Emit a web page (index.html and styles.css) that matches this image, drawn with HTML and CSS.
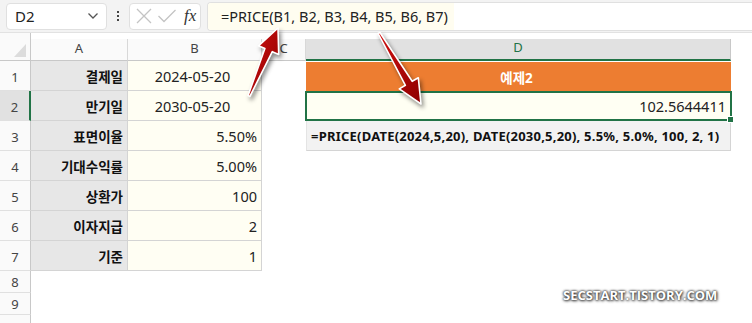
FILE: index.html
```html
<!DOCTYPE html>
<html lang="ko">

<head>
    <meta charset="UTF-8">
    <title>PRICE 예제2</title>
    <link rel="stylesheet" href="styles.css">
</head>

<body>
    <div class="toolbar">
        <div class="name-box">
            <span>D2</span>
            <svg class="chevron" width="12" height="8" viewBox="0 0 12 8">
                <path d="M1.5 1.5 L6 6 L10.5 1.5" fill="none" stroke="#555" stroke-width="1.3"/>
            </svg>
        </div>
        <div class="dots"><i></i><i></i><i></i></div>
        <div class="fx-box">
            <svg width="18" height="18" viewBox="0 0 18 18">
                <path d="M2 2 L16 16 M16 2 L2 16" stroke="#c4c4c4" stroke-width="1.3"/>
            </svg>
            <svg width="20" height="18" viewBox="0 0 20 18">
                <path d="M1.5 9 L7 14.5 L18.5 3" fill="none" stroke="#c4c4c4" stroke-width="1.3"/>
            </svg>
            <span class="fx">fx</span>
        </div>
        <div class="formula-bar">
            <span class="formula-text">=PRICE(B1, B2, B3, B4, B5, B6, B7)</span>
        </div>
    </div>

    <div class="sheet">
        <!-- column headers -->
        <div class="corner"><span class="tri"></span></div>
        <div class="col-head">A</div>
        <div class="col-head">B</div>
        <div class="col-head">C</div>
        <div class="col-head active">D</div>
        <div class="col-head blank"></div>

        <!-- row 1 -->
        <div class="row-head">1</div>
        <div class="cell label">결제일</div>
        <div class="cell value center">2024-05-20</div>
        <div class="cell"></div>
        <div class="cell title">예제2</div>
        <div class="cell"></div>

        <!-- row 2 -->
        <div class="row-head active">2</div>
        <div class="cell label">만기일</div>
        <div class="cell value center">2030-05-20</div>
        <div class="cell"></div>
        <div class="cell result">102.5644411<span class="handle"></span></div>
        <div class="cell"></div>

        <!-- row 3 -->
        <div class="row-head">3</div>
        <div class="cell label">표면이율</div>
        <div class="cell value">5.50%</div>
        <div class="cell"></div>
        <div class="cell note">=PRICE(DATE(2024,5,20), DATE(2030,5,20), 5.5%, 5.0%, 100, 2, 1)</div>
        <div class="cell"></div>

        <!-- row 4 -->
        <div class="row-head">4</div>
        <div class="cell label">기대수익률</div>
        <div class="cell value">5.00%</div>
        <div class="cell"></div>
        <div class="cell"></div>
        <div class="cell"></div>

        <!-- row 5 -->
        <div class="row-head">5</div>
        <div class="cell label">상환가</div>
        <div class="cell value">100</div>
        <div class="cell"></div>
        <div class="cell"></div>
        <div class="cell"></div>

        <!-- row 6 -->
        <div class="row-head">6</div>
        <div class="cell label">이자지급</div>
        <div class="cell value">2</div>
        <div class="cell"></div>
        <div class="cell"></div>
        <div class="cell"></div>

        <!-- row 7 -->
        <div class="row-head">7</div>
        <div class="cell label">기준</div>
        <div class="cell value">1</div>
        <div class="cell"></div>
        <div class="cell"></div>
        <div class="cell"></div>

        <div class="row-head short">8</div>
        <div class="cell"></div>
        <div class="cell"></div>
        <div class="cell"></div>
        <div class="cell"></div>
        <div class="cell"></div>

        <div class="row-head short">9</div>
        <div class="cell"></div>
        <div class="cell"></div>
        <div class="cell"></div>
        <div class="cell"></div>
        <div class="cell"></div>

        <div class="row-head short"></div>
    </div>

    <!-- callout arrows drawn over the sheet -->
    <svg class="arrows" width="752" height="323" viewBox="0 0 752 323">
        <defs>
            <linearGradient id="red" x1="0" y1="0" x2="1" y2="1">
                <stop offset="0" stop-color="#d01010"/>
                <stop offset="1" stop-color="#8e0000"/>
            </linearGradient>
        </defs>
        <polygon points="248.1,95.6 264.9,48.5 258.5,45.8 278,28 278.7,54.4 272.3,51.7 249.9,96.4"
            fill="url(#red)" stroke="#fff" stroke-width="1.6" stroke-linejoin="round"/>
        <polygon points="378.1,33.5 405.4,85.3 399.3,88.9 421,104 418.3,77.7 412.2,81.3 379.9,32.5"
            fill="url(#red)" stroke="#fff" stroke-width="1.6" stroke-linejoin="round"/>
    </svg>

    <div class="watermark">SECSTART.TISTORY.COM</div>
</body>

</html>
```

FILE: styles.css
```css
body {
    margin: 0;
    width: 752px;
    height: 323px;
    overflow: hidden;
    position: relative;
    background-color: #fff;
    font-family: 'Noto Sans', 'Noto Sans CJK KR', sans-serif;
    color: #222;
}

/* formula toolbar */
.toolbar {
    display: flex;
    align-items: center;
    height: 33px;
    padding-left: 6px;
    background-color: #f3f3f3;
    border-bottom: 1px solid #e2e2e2;
    box-sizing: border-box;
}

.name-box {
    display: flex;
    align-items: center;
    justify-content: space-between;
    width: 101px;
    height: 27px;
    padding: 0 7px 0 8px;
    box-sizing: border-box;
    background-color: #fff;
    border: 1px solid #e0e0e0;
    border-radius: 4px;
    font-size: 15px;
}

.dots {
    display: flex;
    flex-direction: column;
    gap: 2px;
    width: 22px;
    align-items: center;
}

.dots i {
    display: block;
    width: 2px;
    height: 2px;
    background-color: #444;
}

.fx-box {
    display: flex;
    align-items: center;
    gap: 4px;
    width: 72px;
    height: 27px;
    padding-left: 5px;
    box-sizing: border-box;
    background-color: #fff;
    border: 1px solid #e0e0e0;
    border-radius: 4px;
}

.fx {
    font-family: 'Liberation Serif', serif;
    font-style: italic;
    font-size: 17px;
    color: #333;
    margin-left: 3px;
}

.formula-bar {
    flex: 1;
    height: 27px;
    margin-left: 6px;
    display: flex;
    align-items: center;
    background-color: #fff;
    border: 1px solid #e0e0e0;
    border-right: none;
    border-radius: 4px 0 0 4px;
    overflow: hidden;
}

.formula-text {
    height: 100%;
    display: flex;
    align-items: center;
    padding: 0 6px 0 13px;
    background-color: #fffdf0;
    font-size: 14.5px;
    white-space: nowrap;
}

/* sheet grid */
.sheet {
    display: grid;
    grid-template-columns: 31px 97px 134px 44px 425px 1fr;
    grid-template-rows: 28px repeat(7, 30px) 22px 22px 22px;
    background-color: #fff;
}

.corner {
    background-color: #fafafa;
    border-right: 1px solid #c8c8c8;
    border-bottom: 1px solid #c8c8c8;
    position: relative;
}

.tri {
    position: absolute;
    right: 4px;
    bottom: 3px;
    width: 0;
    height: 0;
    border-left: 12px solid transparent;
    border-bottom: 13px solid #dcdcdc;
}

.col-head {
    display: flex;
    align-items: flex-end;
    justify-content: center;
    padding-bottom: 3px;
    box-sizing: border-box;
    margin-top: 6px;
    font-size: 13px;
    color: #444;
    background-color: #fafafa;
    border-right: 1px solid #d8d8d8;
    border-bottom: 1px solid #c8c8c8;
}

.col-head.active {
    background-color: #e1e1e1;
    color: #217346;
    border-bottom: 2px solid #217346;
    border-right-color: #c8c8c8;
}

.col-head.blank {
    background-color: #fff;
    border: none;
}

.row-head {
    display: flex;
    align-items: flex-end;
    justify-content: center;
    padding-bottom: 4px;
    box-sizing: border-box;
    font-size: 13px;
    color: #444;
    background-color: #fafafa;
    border-right: 1px solid #c8c8c8;
    border-bottom: 1px solid #e0e0e0;
}

.row-head.active {
    background-color: #e1e1e1;
    border-right: 2px solid #217346;
}

.row-head.short {
    align-items: center;
    padding-bottom: 0;
}

.cell {
    display: flex;
    align-items: center;
    justify-content: flex-end;
    padding-right: 4px;
    box-sizing: border-box;
    font-size: 14px;
    white-space: nowrap;
}

.label {
    background-color: #e7e7e7;
    border-right: 1px solid #d4d4d4;
    border-bottom: 1px solid #d4d4d4;
    font-size: 13.5px;
    font-weight: bold;
    color: #111;
}

.value {
    background-color: #fffef3;
    border-right: 1px solid #d4d4d4;
    border-bottom: 1px solid #d4d4d4;
    font-size: 14.5px;
}

.value.center {
    justify-content: center;
}

.title {
    justify-content: center;
    background-color: #ed7d31;
    color: #fff;
    font-size: 13.5px;
    font-weight: bold;
    border-top: 1px solid #fff;
}

.result {
    position: relative;
    margin-left: -1px;
    margin-right: -1px;
    background-color: #fffff3;
    border: 2px solid #217346;
    font-size: 14.5px;
}

.handle {
    position: absolute;
    right: -4px;
    bottom: -4px;
    width: 5px;
    height: 5px;
    background-color: #217346;
    border: 1px solid #fff;
}

.note {
    justify-content: flex-start;
    padding-left: 4px;
    background-color: #f2f2f2;
    border-right: 1px solid #d4d4d4;
    border-bottom: 1px solid #d4d4d4;
    border-left: 1px solid #e4e4e4;
    font-size: 13px;
    font-weight: bold;
    letter-spacing: 0.22px;
    color: #111;
}

/* overlays */
.arrows {
    position: absolute;
    left: 0;
    top: 0;
    filter: drop-shadow(2px 3px 2px rgba(0, 0, 0, 0.45));
}

.watermark {
    position: absolute;
    left: 563px;
    top: 286px;
    font-family: 'Open Sans', 'Noto Sans', sans-serif;
    font-size: 13px;
    font-weight: bold;
    color: #fff;
    text-shadow: 0 0 2px #333, 0 0 3px #444, 1px 1px 3px #555;
}
```
